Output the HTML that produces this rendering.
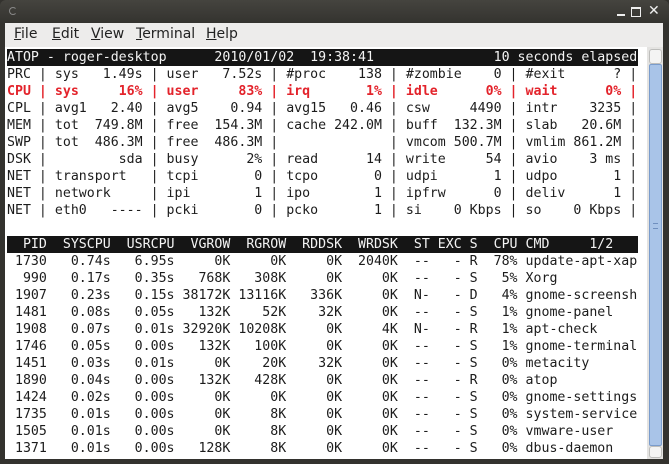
<!DOCTYPE html>
<html><head><meta charset="utf-8"><style>
html,body{margin:0;padding:0;width:669px;height:464px;overflow:hidden;background:#33322e;}
.title{position:absolute;left:0;top:0;width:669px;height:23px;background:linear-gradient(#45443f,#34332f);border-radius:6px 6px 0 0;}
.menu{position:absolute;left:5px;top:23px;width:658px;height:24px;background:#edeceb;font-family:"DejaVu Sans","Liberation Sans",sans-serif;font-size:14px;color:#222;}
.menu span{position:absolute;top:3px;}
.menu u{text-decoration:underline;}
.term{position:absolute;left:5px;top:47px;width:658px;height:412px;background:#fff;}
.txt{position:absolute;left:2px;top:2px;font-family:"DejaVu Sans Mono","Liberation Mono",monospace;font-size:13.25px;line-height:17px;color:#1c1c1c;}
.txt div{height:17px;width:631px;overflow:hidden;white-space:pre;}
.bar{background:#151515;color:#f4f4f4;}
.red{color:#e3232b;font-weight:bold;}
.btn{position:absolute;top:5px;color:#eee;font-family:"DejaVu Sans",sans-serif;font-weight:bold;}
.scr{position:absolute;left:642px;top:0;width:16px;height:412px;background:#e4e3e1;}
.scr i{position:absolute;display:block;box-sizing:border-box;}
</style></head><body>
<div class="title"></div>
<div style="position:absolute;left:9px;top:7px;width:6px;height:6px;border:1px solid #888;border-right-color:transparent;border-radius:50%;"></div>
<div style="position:absolute;left:617px;top:14px;width:8px;height:2px;background:#eee;"></div>
<div style="position:absolute;left:631px;top:7px;width:8px;height:7px;border:1px solid #eee;border-top-width:2px;"></div>
<div class="btn" style="left:648px;top:3px;font-size:14px;">✕</div>
<div class="menu">
<span style="left:9px"><u>F</u>ile</span>
<span style="left:47px"><u>E</u>dit</span>
<span style="left:86px"><u>V</u>iew</span>
<span style="left:131px"><u>T</u>erminal</span>
<span style="left:201px"><u>H</u>elp</span>
</div>
<div class="term">
<div class="txt"><div class="bar">ATOP - roger-desktop      2010/01/02  19:38:41               10 seconds elapsed</div><div>PRC | sys   1.49s | user   7.52s | #proc    138 | #zombie    0 | #exit      ? |</div><div class="red">CPU | sys     16% | user     83% | irq       1% | idle      0% | wait      0% |</div><div>CPL | avg1   2.40 | avg5    0.94 | avg15   0.46 | csw     4490 | intr    3235 |</div><div>MEM | tot  749.8M | free  154.3M | cache 242.0M | buff  132.3M | slab   20.6M |</div><div>SWP | tot  486.3M | free  486.3M |              | vmcom 500.7M | vmlim 861.2M |</div><div>DSK |         sda | busy      2% | read      14 | write     54 | avio    3 ms |</div><div>NET | transport   | tcpi       0 | tcpo       0 | udpi       1 | udpo       1 |</div><div>NET | network     | ipi        1 | ipo        1 | ipfrw      0 | deliv      1 |</div><div>NET | eth0   ---- | pcki       0 | pcko       1 | si    0 Kbps | so    0 Kbps |</div><div> </div><div class="bar">  PID  SYSCPU  USRCPU  VGROW  RGROW  RDDSK  WRDSK  ST EXC S  CPU CMD     1/2   </div><div> 1730   0.74s   6.95s     0K     0K     0K  2040K  --   - R  78% update-apt-xap</div><div>  990   0.17s   0.35s   768K   308K     0K     0K  --   - S   5% Xorg</div><div> 1907   0.23s   0.15s 38172K 13116K   336K     0K  N-   - D   4% gnome-screensh</div><div> 1481   0.08s   0.05s   132K    52K    32K     0K  --   - S   1% gnome-panel</div><div> 1908   0.07s   0.01s 32920K 10208K     0K     4K  N-   - R   1% apt-check</div><div> 1746   0.05s   0.00s   132K   100K     0K     0K  --   - S   1% gnome-terminal</div><div> 1451   0.03s   0.01s     0K    20K    32K     0K  --   - S   0% metacity</div><div> 1890   0.04s   0.00s   132K   428K     0K     0K  --   - R   0% atop</div><div> 1424   0.02s   0.00s     0K     0K     0K     0K  --   - S   0% gnome-settings</div><div> 1735   0.01s   0.00s     0K     8K     0K     0K  --   - S   0% system-service</div><div> 1505   0.01s   0.00s     0K     8K     0K     0K  --   - S   0% vmware-user</div><div> 1371   0.01s   0.00s   128K     8K     0K     0K  --   - S   0% dbus-daemon</div></div>
<div class="scr">
<i style="left:2px;top:2px;width:13px;height:15px;background:#f4f4f3;border:1px solid #bdbdbb;border-radius:3px;"></i>
<i style="left:2px;top:17px;width:13px;height:382px;background:#a9c4e8;border:1px solid #7a9ccc;border-radius:2px;"></i>
<i style="left:6px;top:176px;width:5px;height:6px;border-top:1px solid #6f8fbf;border-bottom:1px solid #6f8fbf;"></i>
<i style="left:2px;top:399px;width:13px;height:12px;background:#f4f4f3;border:1px solid #bdbdbb;border-radius:3px;"></i>
</div>
</div>
</body></html>
